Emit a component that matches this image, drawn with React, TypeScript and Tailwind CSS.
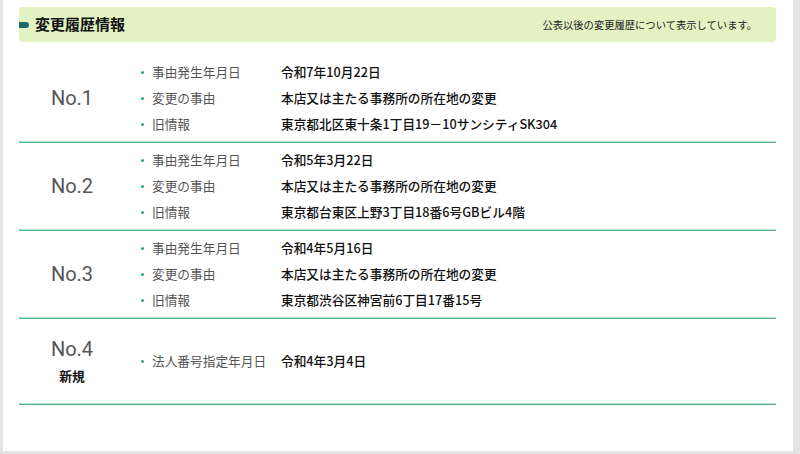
const ROWS = [
  {
    no: 'No.1',
    items: [
      ['事由発生年月日', '令和7年10月22日'],
      ['変更の事由', '本店又は主たる事務所の所在地の変更'],
      ['旧情報', '東京都北区東十条1丁目19－10サンシティSK304'],
    ],
  },
  {
    no: 'No.2',
    items: [
      ['事由発生年月日', '令和5年3月22日'],
      ['変更の事由', '本店又は主たる事務所の所在地の変更'],
      ['旧情報', '東京都台東区上野3丁目18番6号GBビル4階'],
    ],
  },
  {
    no: 'No.3',
    items: [
      ['事由発生年月日', '令和4年5月16日'],
      ['変更の事由', '本店又は主たる事務所の所在地の変更'],
      ['旧情報', '東京都渋谷区神宮前6丁目17番15号'],
    ],
  },
]

const font = { fontFamily: '"Noto Sans CJK JP", "Noto Sans", sans-serif' }
const num = { fontFamily: 'Roboto, "Noto Sans", sans-serif' }

function Item({ label, value }: { label: string; value: string }) {
  return (
    <div className="flex items-center h-[26px]">
      <span className="w-[3px] h-[3px] rounded-full bg-[#2aa873] ml-[16px] mr-[8px]" />
      <span className="w-[129px] text-[12.7px] text-[#555]">{label}</span>
      <span className="text-[12.7px] font-medium text-[#111]">{value}</span>
    </div>
  )
}

function Divider() {
  return <div className="h-[2px] border-t border-[#b5e2cc] bg-[#4fb489]" />
}

export default function App() {
  return (
    <div className="w-[800px] h-[454px] bg-[#e4e4e4] overflow-hidden" style={font}>
      <div className="ml-[3px] mr-[7px] h-[451px] bg-white pl-[16px] pr-[17px] pt-[7px]">
        <div className="h-[35px] rounded-[4px] bg-[#e2f2c2] flex items-center">
          <span className="w-[10px] h-[6px] rounded-r-full rounded-l-[1px] bg-[#1c6a6c]" />
          <h2 className="ml-[6px] text-[15px] font-bold text-[#111]">変更履歴情報</h2>
          <span className="ml-auto mr-[19px] text-[10.3px] text-[#222]">公表以後の変更履歴について表示しています。</span>
        </div>

        <div className="mt-[13px]">
          {ROWS.map((r) => (
            <div key={r.no}>
              <div className="flex items-center h-[86px]">
                <div className="w-[106px] text-center text-[20px] text-[#555]" style={num}>
                  {r.no}
                </div>
                <div className="flex flex-col">
                  {r.items.map(([l, v]) => (
                    <Item key={l} label={l} value={v} />
                  ))}
                </div>
              </div>
              <Divider />
            </div>
          ))}
          <div className="flex items-center h-[84px]">
            <div className="w-[106px] flex flex-col items-center">
              <span className="text-[20px] text-[#555] leading-[26px]" style={num}>
                No.4
              </span>
              <span className="mt-[4px] text-[12.7px] font-bold text-[#111]">新規</span>
            </div>
            <Item label="法人番号指定年月日" value="令和4年3月4日" />
          </div>
          <Divider />
        </div>
      </div>
    </div>
  )
}
